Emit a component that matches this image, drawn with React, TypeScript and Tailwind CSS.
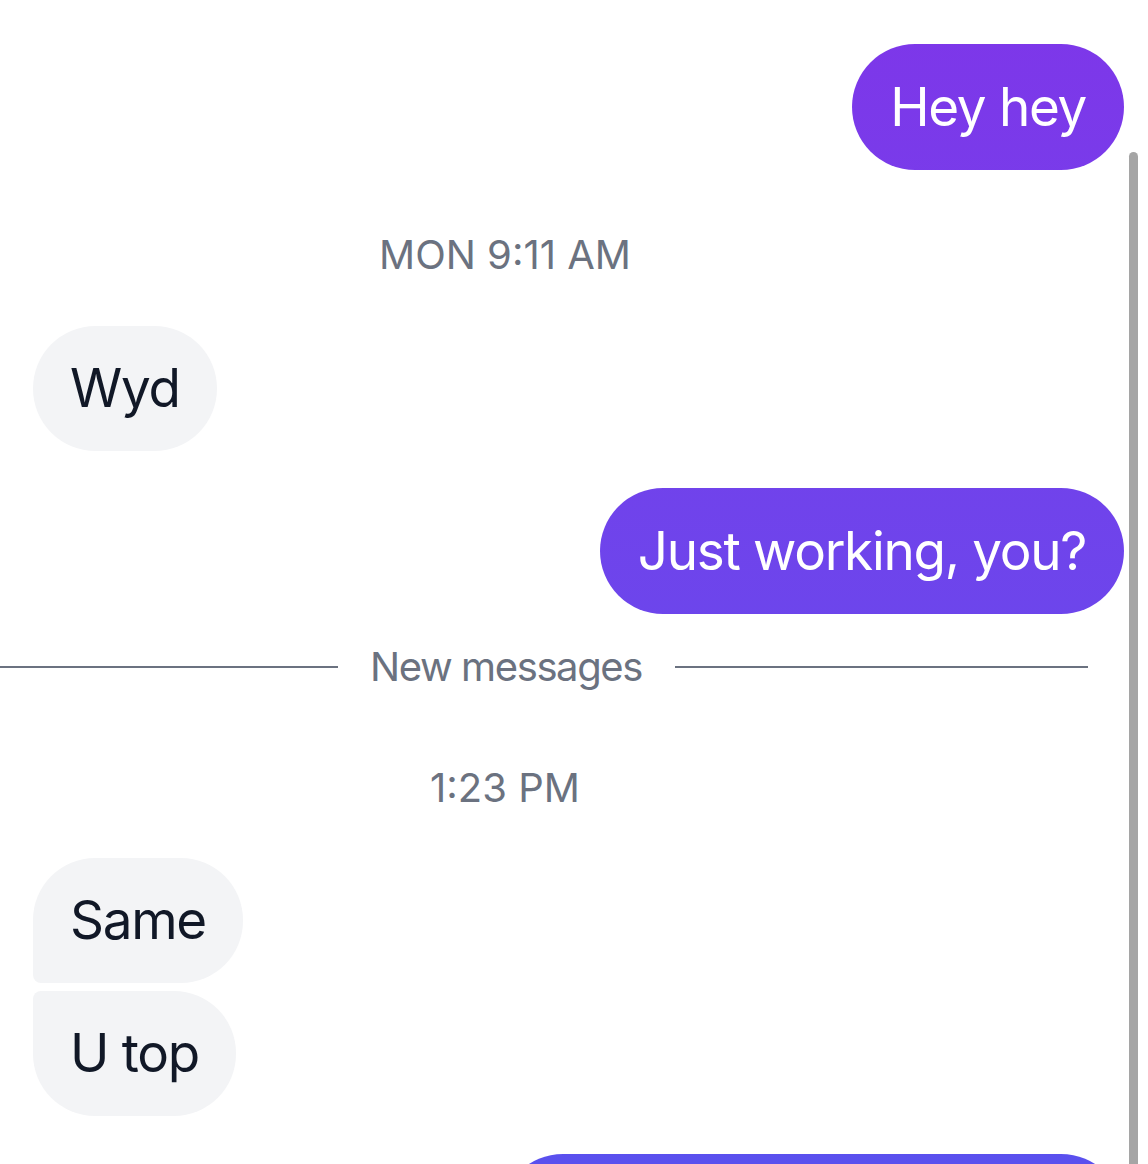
import React from 'react';

const font = { fontFamily: 'Inter, "Noto Sans", sans-serif' };

function OutBubble({ text, className = '' }: { text: string; className?: string }) {
  return (
    <div className={`flex justify-end pr-[24px] ${className}`}>
      <div className="rounded-full bg-linear-to-b from-[#7e36e9] to-[#5a50ee] bg-fixed px-[38px] h-[126px] flex items-center text-white text-[53px] leading-none tracking-[-1.3px]">
        {text}
      </div>
    </div>
  );
}

function InBubble({ text, shape = 'single', className = '' }: { text: string; shape?: 'first' | 'last' | 'single'; className?: string }) {
  const radius =
    shape === 'first'
      ? 'rounded-[62px] rounded-bl-[8px]'
      : shape === 'last'
        ? 'rounded-[62px] rounded-tl-[8px]'
        : 'rounded-full';
  return (
    <div className={`flex justify-start pl-[33px] ${className}`}>
      <div className={`${radius} bg-[#f3f4f6] px-[37px] h-[125px] flex items-center text-[#111827] text-[53px] leading-none tracking-[-1.3px]`}>
        {text}
      </div>
    </div>
  );
}

export default function App() {
  return (
    <div className="relative w-[1148px] h-[1164px] overflow-hidden bg-white" style={font}>
      <div className="pt-[44px]">
        <OutBubble text="Hey hey" />

        <div className="mt-[62px] w-[1010px] text-center text-[40px] leading-[46px] text-[#6b7280]">
          MON 9:11 AM
        </div>

        <InBubble text="Wyd" className="mt-[48px]" />

        <OutBubble text="Just working, you?" className="mt-[37px]" />

        <div className="mt-[30px] w-[1088px] flex items-center h-[46px] text-[#6b7280]">
          <div className="w-[338px] h-[2px] bg-[#6b7280]" />
          <span className="ml-[32px] mr-[33px] text-[40px] leading-[46px] tracking-[-1.4px]">New messages</span>
          <div className="flex-1 h-[2px] bg-[#6b7280]" />
        </div>

        <div className="mt-[75px] w-[1010px] text-center text-[40px] leading-[46px] text-[#6b7280]">
          1:23 PM
        </div>

        <InBubble text="Same" shape="first" className="mt-[47px]" />
        <InBubble text="U top" shape="last" className="mt-[8px]" />

        {/* next outgoing bubble, only its top edge is in view */}
        <div className="mt-[38px] flex justify-end pr-[24px]">
          <div className="w-[624px] h-[126px] rounded-full bg-linear-to-b from-[#7e36e9] to-[#5a50ee] bg-fixed" />
        </div>
      </div>

      {/* overlay scrollbar */}
      <div className="absolute right-[10px] top-[152px] w-[9px] h-[1100px] rounded-full bg-[#a5a5a5]" />
    </div>
  );
}
